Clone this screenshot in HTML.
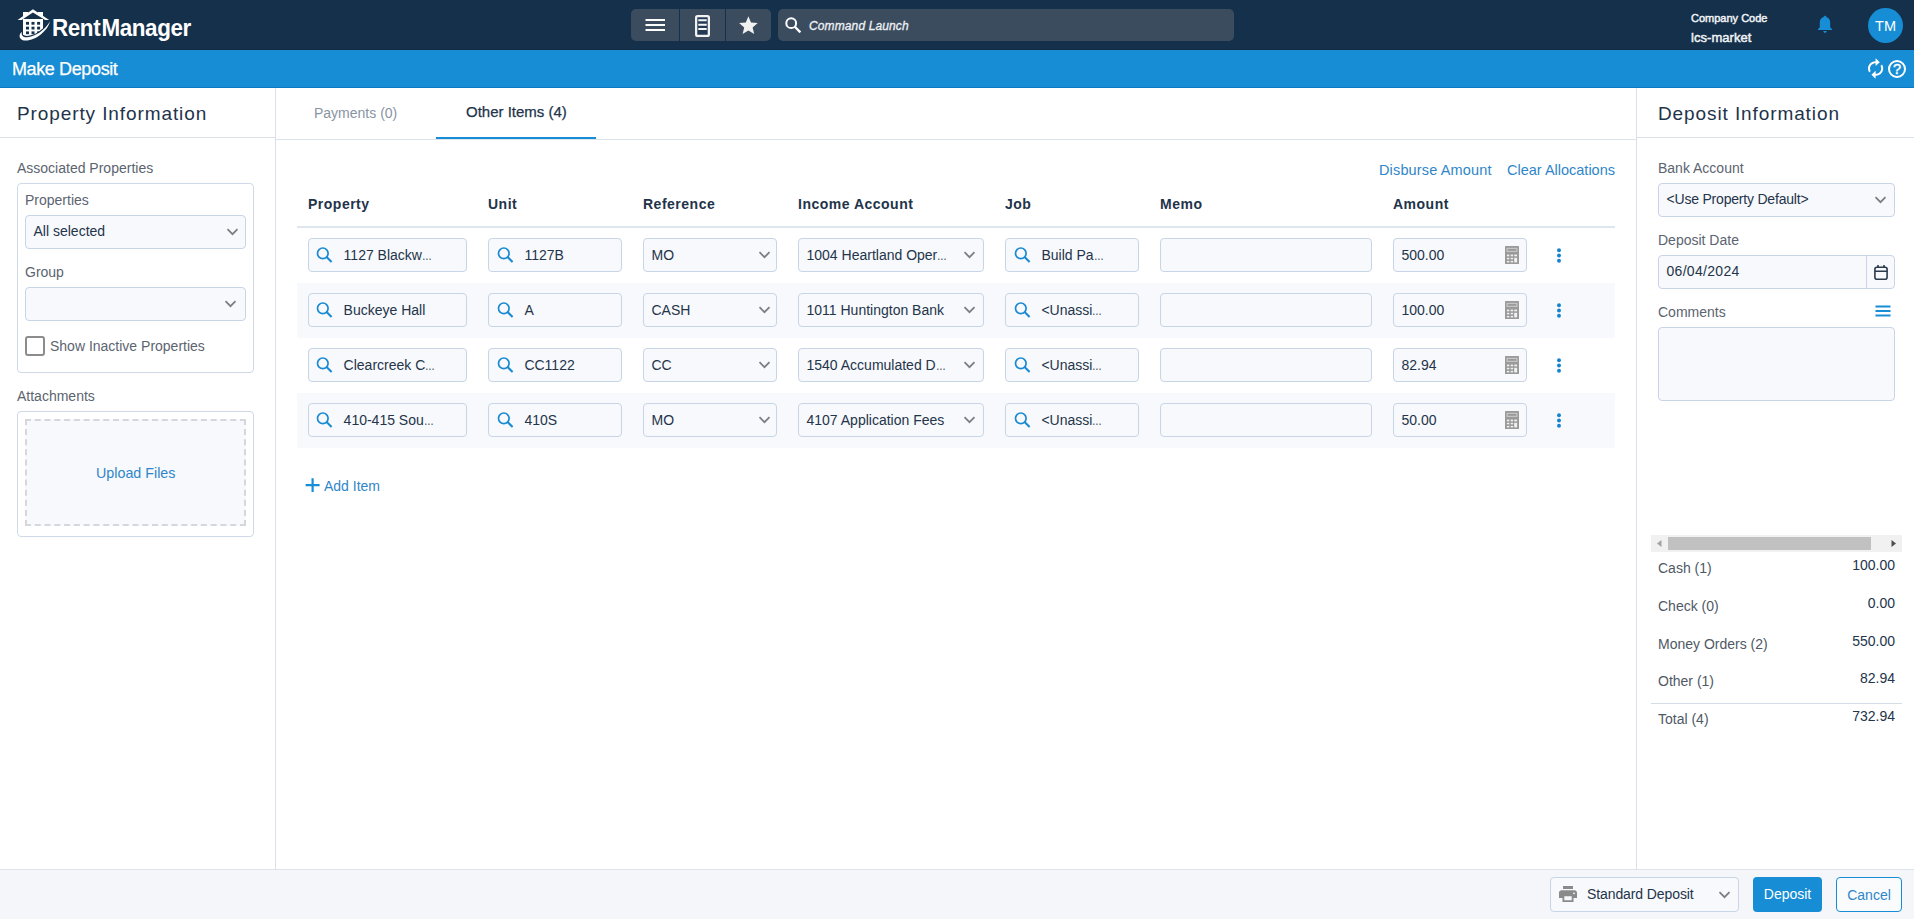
<!DOCTYPE html>
<html lang="en">
<head>
<meta charset="utf-8">
<title>Make Deposit - Rent Manager</title>
<style>
*{box-sizing:border-box;margin:0;padding:0}
html,body{width:1914px;height:919px;overflow:hidden;background:#fff}
body{font-family:"Liberation Sans",sans-serif;font-size:14px;color:#1f2d3d;position:relative}
.abs{position:absolute}
/* top bar */
#top{position:absolute;left:0;top:0;width:1914px;height:50px;background:#15304b;border-bottom:1px solid #122a42}
#sub{position:absolute;left:0;top:50px;width:1914px;height:38px;background:#168dd4;border-bottom:1px solid #0b7ac6}
#sub .ttl{position:absolute;left:12px;top:8px;font-size:18px;color:#fff;line-height:22px;letter-spacing:-.38px;-webkit-text-stroke:.25px #fff;white-space:nowrap}
.tb{position:absolute;top:9px;height:32px;background:#3b4c5f}
#cmd{position:absolute;left:778px;top:9px;width:456px;height:32px;border-radius:5px;background:#3b4c5f}
#cmd span{position:absolute;left:31px;top:9px;font-style:italic;font-size:12px;color:#eef1f4;line-height:16px;letter-spacing:.12px;-webkit-text-stroke:.3px #eef1f4;white-space:nowrap}
#cc1{position:absolute;left:1691px;top:11px;font-size:11px;color:#f2f4f6;line-height:14px;letter-spacing:0;white-space:nowrap;-webkit-text-stroke:.45px #f2f4f6}
#cc2{position:absolute;left:1691px;top:30px;font-size:13px;color:#f2f4f6;line-height:15px;letter-spacing:.05px;white-space:nowrap;-webkit-text-stroke:.45px #f2f4f6}
#av{position:absolute;left:1868px;top:8px;width:35px;height:35px;border-radius:50%;background:#168dd4;color:#fff;font-size:14.5px;text-align:center;line-height:37px}
/* panels */
#left{position:absolute;left:0;top:88px;width:276px;height:781px;border-right:1px solid #d9e0ea;background:#fff}
#right{position:absolute;left:1636px;top:88px;width:278px;height:781px;border-left:1px solid #d9e0ea;background:#fff}
.ph{position:absolute;left:0;top:0;width:100%;height:50px;border-bottom:1px solid #d9e0ea}
.ph span{position:absolute;top:14px;font-size:19px;color:#22334a;line-height:24px;letter-spacing:.9px;white-space:nowrap}
.lbl{position:absolute;font-size:14px;color:#5b6470;line-height:17px;white-space:nowrap}
.box{position:absolute;border:1px solid #cfd9e8;border-radius:4px;background:#fff}
.inp{position:absolute;height:34px;border:1px solid #c8d5e6;border-radius:4px;background:#f7f9fc;font-size:14px;color:#24344a;line-height:32px;white-space:nowrap;overflow:hidden}
.inp .t{position:absolute;top:0;left:7.5px}
.inp svg{position:absolute}
.el{display:inline-block;font-style:normal;width:9.6px;transform:scaleX(.7);transform-origin:0 50%}
.lnk{position:absolute;font-size:14.5px;color:#2f86c9;line-height:18px;white-space:nowrap}
/* center */
#center{position:absolute;left:276px;top:88px;width:1360px;height:781px;background:#fff}
#tabs{position:absolute;left:0;top:0;width:1360px;height:52px;border-bottom:1px solid #dde3ec}
.th{position:absolute;top:108px;font-size:14px;font-weight:bold;letter-spacing:.5px;color:#22334a;line-height:17px;white-space:nowrap}
.row{position:absolute;left:21px;width:1318px;height:55px}
.row.alt{background:#f7f9fc}
/* footer */
#foot{position:absolute;left:0;top:869px;width:1914px;height:50px;background:#f4f6fa;border-top:1px solid #dde3ec}
.sumr{position:absolute;left:21px;width:237px;height:20px}
.sumr .a{position:absolute;left:0;top:3px;font-size:14px;color:#4f5965;line-height:17px}
.sumr .b{position:absolute;right:0;top:0;font-size:14px;color:#24344a;line-height:17px}
</style>
</head>
<body>
<div id="top">
  <svg class="abs" style="left:0;top:0" width="60" height="50" viewBox="0 0 60 50">
    <path d="M23 19.1 H43 V29.8 C40 32.8 33 36.5 27 36.4 C25.2 36.4 23.8 36.1 23 35.7 Z" fill="#fff"/>
    <g fill="#15304b">
      <rect x="26" y="21.9" width="3" height="2.8"/><rect x="31.5" y="21.9" width="3" height="2.8"/><rect x="37.1" y="21.9" width="3" height="2.8"/>
      <rect x="26" y="26.7" width="3" height="2.8"/><rect x="31.5" y="26.7" width="3" height="2.8"/><rect x="37.1" y="26.7" width="3" height="2.8"/>
      <rect x="26" y="31.4" width="3" height="2.8"/><rect x="31.5" y="31.4" width="3" height="2.8"/><rect x="37.1" y="31.4" width="3" height="2.8"/>
    </g>
    <path d="M21.8 32.2 C20.8 35 22.5 37 27 37 C35 37 45 30 49.8 22" fill="none" stroke="#15304b" stroke-width="2.2"/>
    <path d="M50 21.6 C47.4 31 36 40.8 25.5 40.6 C20.6 40.5 18.2 37 20.4 33.2 L22 32 C21 35.2 22.8 37.4 27.2 37.3 C35 37.1 45 30 50 21.6 Z" fill="#fff"/>
    <polygon points="23,12.1 28.3,12.1 28.3,14.2 23,17.6" fill="#fff"/>
    <polygon points="43,12.1 37.7,12.1 37.7,14.2 43,17.6" fill="#fff"/>
    <polygon points="17.6,19.9 32.9,9.2 49.2,19.9 45.2,19.9 32.9,12.4 21.6,19.9" fill="#fff"/>
  </svg>
  <div class="abs" style="left:52px;top:14.5px;font-size:23px;font-weight:bold;color:#fff;line-height:26px;letter-spacing:-.45px;word-spacing:-4.6px;white-space:nowrap;transform:scaleX(.977);transform-origin:0 0">Rent Manager</div>
  <div class="abs" style="left:631px;top:9px;width:140px;height:32px;border-radius:5px;background:#3b4c5f"></div>
  <div class="abs" style="left:679px;top:9px;width:1px;height:32px;background:#15304b"></div>
  <div class="abs" style="left:725px;top:9px;width:1px;height:32px;background:#15304b"></div>
  <svg class="abs" style="left:631px;top:9px" width="140" height="32" viewBox="0 0 140 32">
    <path d="M14.5 11 H34 M14.5 16 H34 M14.5 21 H34" stroke="#fff" stroke-width="2" fill="none"/>
    <rect x="65.15" y="7.05" width="12.7" height="19.8" rx="1.4" fill="#223a54" stroke="#f2f2f2" stroke-width="2.3"/>
    <path d="M67.3 11.3 H75.7 M67.3 15.75 H75.7 M67.3 20 H75.7" stroke="#f6f6f6" stroke-width="2" fill="none"/>
    <path d="M117.5 7.6 L120.1 13.8 L126.8 14.4 L121.7 18.8 L123.3 25.4 L117.5 21.9 L111.7 25.4 L113.3 18.8 L108.2 14.4 L114.9 13.8 Z" fill="#f1f1f1" transform="translate(-0.1,-0.4)"/>
  </svg>
  <div id="cmd"><svg class="abs" style="left:7px;top:8px" width="17" height="16" viewBox="0 0 17 16"><circle cx="6.2" cy="6.2" r="4.9" fill="none" stroke="#fff" stroke-width="2"/><path d="M9.8 9.8 L15.4 15.4" stroke="#fff" stroke-width="2.3" fill="none"/></svg><span>Command Launch</span></div>
  <div id="cc1">Company Code</div>
  <div id="cc2">lcs-market</div>
  <svg class="abs" style="left:1817px;top:15px" width="16" height="19" viewBox="0 0 16 19"><path d="M8 0.8 C8.8 0.8 9.3 1.4 9.3 2.1 C11.8 2.8 13.2 4.9 13.2 7.6 V12.2 L15 14.2 V15 H1 V14.2 L2.8 12.2 V7.6 C2.8 4.9 4.2 2.8 6.7 2.1 C6.7 1.4 7.2 0.8 8 0.8 Z" fill="#168dd4"/><path d="M6.3 16 H9.7 C9.7 17 9 17.8 8 17.8 C7 17.8 6.3 17 6.3 16 Z" fill="#168dd4"/></svg>
  <div id="av">TM</div>
</div>
<div id="sub"><div class="ttl">Make Deposit</div>
  <svg class="abs" style="left:1866px;top:8px" width="20" height="22" viewBox="0 0 20 22"><path d="M10 4.2 V1.2 L5.8 5.2 L10 9.2 V6.2 C13.1 6.2 15.6 8.6 15.6 11.6 C15.6 12.5 15.4 13.4 14.9 14.2 L16.4 15.6 C17.2 14.5 17.6 13.1 17.6 11.6 C17.6 7.5 14.2 4.2 10 4.2 Z M10 17 C6.9 17 4.4 14.6 4.4 11.6 C4.4 10.7 4.6 9.8 5.1 9 L3.6 7.6 C2.8 8.7 2.4 10.1 2.4 11.6 C2.4 15.7 5.8 19 10 19 V22 L14.2 18 L10 14 Z" fill="#fff" transform="translate(19.6,-0.9) scale(-1,0.98)"/></svg>
  <div class="abs" style="left:1888px;top:9.5px;width:18px;height:18px;border:2px solid #fff;border-radius:50%;color:#fff;font-size:14.5px;-webkit-text-stroke:.4px #fff;text-align:center;line-height:14.5px">?</div>
</div>

<div id="left">
  <div class="ph"><span style="left:17px">Property Information</span></div>
  <div class="lbl" style="left:17px;top:72px">Associated Properties</div>
  <div class="box" style="left:17px;top:95px;width:237px;height:190px"></div>
  <div class="lbl" style="left:25px;top:104px">Properties</div>
  <div class="inp" style="left:25px;top:127px;width:221px"><span class="t" style="top:-1px">All selected</span><svg style="left:200px;top:12px" width="13" height="8" viewBox="0 0 13 8"><path d="M1.5 1.2 L6.5 6.2 L11.5 1.2" fill="none" stroke="#7b7f85" stroke-width="1.8"/></svg></div>
  <div class="lbl" style="left:25px;top:176px">Group</div>
  <div class="inp" style="left:25px;top:199px;width:221px"><svg style="left:198px;top:12px" width="13" height="8" viewBox="0 0 13 8"><path d="M1.5 1.2 L6.5 6.2 L11.5 1.2" fill="none" stroke="#7b7f85" stroke-width="1.8"/></svg></div>
  <div class="abs" style="left:25px;top:248px;width:20px;height:20px;border:2px solid #8c8c8c;border-radius:3px;background:#fff"></div>
  <div class="lbl" style="left:50px;top:250px">Show Inactive Properties</div>
  <div class="lbl" style="left:17px;top:300px">Attachments</div>
  <div class="box" style="left:17px;top:323px;width:237px;height:126px"></div>
  <div class="abs" style="left:25px;top:331px;width:221px;height:107px;background:#f7f9fc;border:2px dashed #d4d7db"></div>
  <div class="lnk" style="left:96px;top:376px;font-size:14.3px">Upload Files</div>
</div>

<div id="center">
  <div id="tabs"><div class="abs" style="left:38px;top:17px;font-size:14px;color:#8894a3;line-height:17px;white-space:nowrap">Payments (0)</div><div class="abs" style="left:190px;top:15px;font-size:15px;color:#22334a;line-height:18px;white-space:nowrap;-webkit-text-stroke:.25px #22334a">Other Items (4)</div><div class="abs" style="left:160px;top:49px;width:160px;height:2px;background:#168dd4"></div></div>
  <div class="lnk" style="left:1103px;top:73px;letter-spacing:.15px">Disburse Amount</div>
  <div class="lnk" style="left:1231px;top:73px">Clear Allocations</div>
  <div class="th" style="left:32px">Property</div>
  <div class="th" style="left:212px">Unit</div>
  <div class="th" style="left:367px">Reference</div>
  <div class="th" style="left:522px">Income Account</div>
  <div class="th" style="left:729px">Job</div>
  <div class="th" style="left:884px">Memo</div>
  <div class="th" style="left:1117px">Amount</div>
  <div class="abs" style="left:21px;top:138px;width:1318px;height:2px;background:#dfe6ee"></div>
  <div class="row" style="top:140px">
    <div class="inp" style="left:11px;top:10px;width:159px"><svg style="left:7px;top:8px" width="17" height="17" viewBox="0 0 17 17"><circle cx="6.8" cy="6.3" r="5.3" fill="none" stroke="#1a8ad2" stroke-width="1.7"/><path d="M10.6 10.1 L15.6 15.1" stroke="#1a8ad2" stroke-width="2.1" fill="none"/></svg><span class="t" style="left:34.6px">1127 Blackw<i class="el">…</i></span></div>
    <div class="inp" style="left:191px;top:10px;width:134px"><svg style="left:8px;top:8px" width="17" height="17" viewBox="0 0 17 17"><circle cx="6.8" cy="6.3" r="5.3" fill="none" stroke="#1a8ad2" stroke-width="1.7"/><path d="M10.6 10.1 L15.6 15.1" stroke="#1a8ad2" stroke-width="2.1" fill="none"/></svg><span class="t" style="left:35.4px">1127B</span></div>
    <div class="inp" style="left:346px;top:10px;width:134px"><span class="t">MO</span><svg style="left:114px;top:12px" width="13" height="8" viewBox="0 0 13 8"><path d="M1.5 1.2 L6.5 6.2 L11.5 1.2" fill="none" stroke="#7b7f85" stroke-width="1.8"/></svg></div>
    <div class="inp" style="left:501px;top:10px;width:186px"><span class="t">1004 Heartland Oper<i class="el">…</i></span><svg style="left:164px;top:12px" width="13" height="8" viewBox="0 0 13 8"><path d="M1.5 1.2 L6.5 6.2 L11.5 1.2" fill="none" stroke="#7b7f85" stroke-width="1.8"/></svg></div>
    <div class="inp" style="left:708px;top:10px;width:134px"><svg style="left:8px;top:8px" width="17" height="17" viewBox="0 0 17 17"><circle cx="6.8" cy="6.3" r="5.3" fill="none" stroke="#1a8ad2" stroke-width="1.7"/><path d="M10.6 10.1 L15.6 15.1" stroke="#1a8ad2" stroke-width="2.1" fill="none"/></svg><span class="t" style="left:35.4px">Build Pa<i class="el">…</i></span></div>
    <div class="inp" style="left:863px;top:10px;width:212px"></div>
    <div class="inp" style="left:1096px;top:10px;width:134px"><span class="t">500.00</span><svg style="left:111px;top:7px" width="14" height="18" viewBox="0 0 14 18"><rect x="0" y="0" width="14" height="18" rx=".6" fill="#9a9a9a"/><rect x="1.5" y="1.8" width="11" height="4.2" fill="#c4c4c4"/><rect x="2.8" y="3" width="8.4" height="1.8" fill="#9a9a9a"/><g fill="#f1f1f1"><rect x="1.9" y="8.6" width="2.4" height="1.7"/><rect x="5.7" y="8.6" width="2.4" height="1.7"/><rect x="9.2" y="8.6" width="2.9" height="1.7"/><rect x="1.9" y="11.8" width="2.4" height="1.5"/><rect x="5.7" y="11.8" width="2.4" height="1.5"/><rect x="1.9" y="14.9" width="2.4" height="1.5"/><rect x="5.7" y="14.9" width="2.4" height="1.5"/><rect x="9.2" y="11.8" width="2.9" height="4.6"/></g></svg></div>
    <svg class="abs" style="left:1258.7px;top:20px" width="6" height="16" viewBox="0 0 6 16"><circle cx="3" cy="2.3" r="1.95" fill="#1583d3"/><circle cx="3" cy="7.55" r="1.95" fill="#1583d3"/><circle cx="3" cy="12.8" r="1.95" fill="#1583d3"/></svg>
  </div>
  <div class="row alt" style="top:195px">
    <div class="inp" style="left:11px;top:10px;width:159px"><svg style="left:7px;top:8px" width="17" height="17" viewBox="0 0 17 17"><circle cx="6.8" cy="6.3" r="5.3" fill="none" stroke="#1a8ad2" stroke-width="1.7"/><path d="M10.6 10.1 L15.6 15.1" stroke="#1a8ad2" stroke-width="2.1" fill="none"/></svg><span class="t" style="left:34.6px">Buckeye Hall</span></div>
    <div class="inp" style="left:191px;top:10px;width:134px"><svg style="left:8px;top:8px" width="17" height="17" viewBox="0 0 17 17"><circle cx="6.8" cy="6.3" r="5.3" fill="none" stroke="#1a8ad2" stroke-width="1.7"/><path d="M10.6 10.1 L15.6 15.1" stroke="#1a8ad2" stroke-width="2.1" fill="none"/></svg><span class="t" style="left:35.4px">A</span></div>
    <div class="inp" style="left:346px;top:10px;width:134px"><span class="t">CASH</span><svg style="left:114px;top:12px" width="13" height="8" viewBox="0 0 13 8"><path d="M1.5 1.2 L6.5 6.2 L11.5 1.2" fill="none" stroke="#7b7f85" stroke-width="1.8"/></svg></div>
    <div class="inp" style="left:501px;top:10px;width:186px"><span class="t">1011 Huntington Bank</span><svg style="left:164px;top:12px" width="13" height="8" viewBox="0 0 13 8"><path d="M1.5 1.2 L6.5 6.2 L11.5 1.2" fill="none" stroke="#7b7f85" stroke-width="1.8"/></svg></div>
    <div class="inp" style="left:708px;top:10px;width:134px"><svg style="left:8px;top:8px" width="17" height="17" viewBox="0 0 17 17"><circle cx="6.8" cy="6.3" r="5.3" fill="none" stroke="#1a8ad2" stroke-width="1.7"/><path d="M10.6 10.1 L15.6 15.1" stroke="#1a8ad2" stroke-width="2.1" fill="none"/></svg><span class="t" style="left:35.4px">&lt;Unassi<i class="el">…</i></span></div>
    <div class="inp" style="left:863px;top:10px;width:212px"></div>
    <div class="inp" style="left:1096px;top:10px;width:134px"><span class="t">100.00</span><svg style="left:111px;top:7px" width="14" height="18" viewBox="0 0 14 18"><rect x="0" y="0" width="14" height="18" rx=".6" fill="#9a9a9a"/><rect x="1.5" y="1.8" width="11" height="4.2" fill="#c4c4c4"/><rect x="2.8" y="3" width="8.4" height="1.8" fill="#9a9a9a"/><g fill="#f1f1f1"><rect x="1.9" y="8.6" width="2.4" height="1.7"/><rect x="5.7" y="8.6" width="2.4" height="1.7"/><rect x="9.2" y="8.6" width="2.9" height="1.7"/><rect x="1.9" y="11.8" width="2.4" height="1.5"/><rect x="5.7" y="11.8" width="2.4" height="1.5"/><rect x="1.9" y="14.9" width="2.4" height="1.5"/><rect x="5.7" y="14.9" width="2.4" height="1.5"/><rect x="9.2" y="11.8" width="2.9" height="4.6"/></g></svg></div>
    <svg class="abs" style="left:1258.7px;top:20px" width="6" height="16" viewBox="0 0 6 16"><circle cx="3" cy="2.3" r="1.95" fill="#1583d3"/><circle cx="3" cy="7.55" r="1.95" fill="#1583d3"/><circle cx="3" cy="12.8" r="1.95" fill="#1583d3"/></svg>
  </div>
  <div class="row" style="top:250px">
    <div class="inp" style="left:11px;top:10px;width:159px"><svg style="left:7px;top:8px" width="17" height="17" viewBox="0 0 17 17"><circle cx="6.8" cy="6.3" r="5.3" fill="none" stroke="#1a8ad2" stroke-width="1.7"/><path d="M10.6 10.1 L15.6 15.1" stroke="#1a8ad2" stroke-width="2.1" fill="none"/></svg><span class="t" style="left:34.6px">Clearcreek C<i class="el">…</i></span></div>
    <div class="inp" style="left:191px;top:10px;width:134px"><svg style="left:8px;top:8px" width="17" height="17" viewBox="0 0 17 17"><circle cx="6.8" cy="6.3" r="5.3" fill="none" stroke="#1a8ad2" stroke-width="1.7"/><path d="M10.6 10.1 L15.6 15.1" stroke="#1a8ad2" stroke-width="2.1" fill="none"/></svg><span class="t" style="left:35.4px">CC1122</span></div>
    <div class="inp" style="left:346px;top:10px;width:134px"><span class="t">CC</span><svg style="left:114px;top:12px" width="13" height="8" viewBox="0 0 13 8"><path d="M1.5 1.2 L6.5 6.2 L11.5 1.2" fill="none" stroke="#7b7f85" stroke-width="1.8"/></svg></div>
    <div class="inp" style="left:501px;top:10px;width:186px"><span class="t">1540 Accumulated D<i class="el">…</i></span><svg style="left:164px;top:12px" width="13" height="8" viewBox="0 0 13 8"><path d="M1.5 1.2 L6.5 6.2 L11.5 1.2" fill="none" stroke="#7b7f85" stroke-width="1.8"/></svg></div>
    <div class="inp" style="left:708px;top:10px;width:134px"><svg style="left:8px;top:8px" width="17" height="17" viewBox="0 0 17 17"><circle cx="6.8" cy="6.3" r="5.3" fill="none" stroke="#1a8ad2" stroke-width="1.7"/><path d="M10.6 10.1 L15.6 15.1" stroke="#1a8ad2" stroke-width="2.1" fill="none"/></svg><span class="t" style="left:35.4px">&lt;Unassi<i class="el">…</i></span></div>
    <div class="inp" style="left:863px;top:10px;width:212px"></div>
    <div class="inp" style="left:1096px;top:10px;width:134px"><span class="t">82.94</span><svg style="left:111px;top:7px" width="14" height="18" viewBox="0 0 14 18"><rect x="0" y="0" width="14" height="18" rx=".6" fill="#9a9a9a"/><rect x="1.5" y="1.8" width="11" height="4.2" fill="#c4c4c4"/><rect x="2.8" y="3" width="8.4" height="1.8" fill="#9a9a9a"/><g fill="#f1f1f1"><rect x="1.9" y="8.6" width="2.4" height="1.7"/><rect x="5.7" y="8.6" width="2.4" height="1.7"/><rect x="9.2" y="8.6" width="2.9" height="1.7"/><rect x="1.9" y="11.8" width="2.4" height="1.5"/><rect x="5.7" y="11.8" width="2.4" height="1.5"/><rect x="1.9" y="14.9" width="2.4" height="1.5"/><rect x="5.7" y="14.9" width="2.4" height="1.5"/><rect x="9.2" y="11.8" width="2.9" height="4.6"/></g></svg></div>
    <svg class="abs" style="left:1258.7px;top:20px" width="6" height="16" viewBox="0 0 6 16"><circle cx="3" cy="2.3" r="1.95" fill="#1583d3"/><circle cx="3" cy="7.55" r="1.95" fill="#1583d3"/><circle cx="3" cy="12.8" r="1.95" fill="#1583d3"/></svg>
  </div>
  <div class="row alt" style="top:305px">
    <div class="inp" style="left:11px;top:10px;width:159px"><svg style="left:7px;top:8px" width="17" height="17" viewBox="0 0 17 17"><circle cx="6.8" cy="6.3" r="5.3" fill="none" stroke="#1a8ad2" stroke-width="1.7"/><path d="M10.6 10.1 L15.6 15.1" stroke="#1a8ad2" stroke-width="2.1" fill="none"/></svg><span class="t" style="left:34.6px">410-415 Sou<i class="el">…</i></span></div>
    <div class="inp" style="left:191px;top:10px;width:134px"><svg style="left:8px;top:8px" width="17" height="17" viewBox="0 0 17 17"><circle cx="6.8" cy="6.3" r="5.3" fill="none" stroke="#1a8ad2" stroke-width="1.7"/><path d="M10.6 10.1 L15.6 15.1" stroke="#1a8ad2" stroke-width="2.1" fill="none"/></svg><span class="t" style="left:35.4px">410S</span></div>
    <div class="inp" style="left:346px;top:10px;width:134px"><span class="t">MO</span><svg style="left:114px;top:12px" width="13" height="8" viewBox="0 0 13 8"><path d="M1.5 1.2 L6.5 6.2 L11.5 1.2" fill="none" stroke="#7b7f85" stroke-width="1.8"/></svg></div>
    <div class="inp" style="left:501px;top:10px;width:186px"><span class="t">4107 Application Fees</span><svg style="left:164px;top:12px" width="13" height="8" viewBox="0 0 13 8"><path d="M1.5 1.2 L6.5 6.2 L11.5 1.2" fill="none" stroke="#7b7f85" stroke-width="1.8"/></svg></div>
    <div class="inp" style="left:708px;top:10px;width:134px"><svg style="left:8px;top:8px" width="17" height="17" viewBox="0 0 17 17"><circle cx="6.8" cy="6.3" r="5.3" fill="none" stroke="#1a8ad2" stroke-width="1.7"/><path d="M10.6 10.1 L15.6 15.1" stroke="#1a8ad2" stroke-width="2.1" fill="none"/></svg><span class="t" style="left:35.4px">&lt;Unassi<i class="el">…</i></span></div>
    <div class="inp" style="left:863px;top:10px;width:212px"></div>
    <div class="inp" style="left:1096px;top:10px;width:134px"><span class="t">50.00</span><svg style="left:111px;top:7px" width="14" height="18" viewBox="0 0 14 18"><rect x="0" y="0" width="14" height="18" rx=".6" fill="#9a9a9a"/><rect x="1.5" y="1.8" width="11" height="4.2" fill="#c4c4c4"/><rect x="2.8" y="3" width="8.4" height="1.8" fill="#9a9a9a"/><g fill="#f1f1f1"><rect x="1.9" y="8.6" width="2.4" height="1.7"/><rect x="5.7" y="8.6" width="2.4" height="1.7"/><rect x="9.2" y="8.6" width="2.9" height="1.7"/><rect x="1.9" y="11.8" width="2.4" height="1.5"/><rect x="5.7" y="11.8" width="2.4" height="1.5"/><rect x="1.9" y="14.9" width="2.4" height="1.5"/><rect x="5.7" y="14.9" width="2.4" height="1.5"/><rect x="9.2" y="11.8" width="2.9" height="4.6"/></g></svg></div>
    <svg class="abs" style="left:1258.7px;top:20px" width="6" height="16" viewBox="0 0 6 16"><circle cx="3" cy="2.3" r="1.95" fill="#1583d3"/><circle cx="3" cy="7.55" r="1.95" fill="#1583d3"/><circle cx="3" cy="12.8" r="1.95" fill="#1583d3"/></svg>
  </div>
  <svg class="abs" style="left:29px;top:390px" width="15" height="15" viewBox="0 0 15 15"><path d="M7.6 0.2 V14 M0.6 7.1 H14.6" stroke="#168dd4" stroke-width="2.2" fill="none"/></svg>
  <div class="lnk" style="left:48px;top:389px;font-size:14px">Add Item</div>
</div>

<div id="right">
  <div class="ph"><span style="left:21px">Deposit Information</span></div>
  <div class="lbl" style="left:21px;top:72px">Bank Account</div>
  <div class="inp" style="left:21px;top:95px;width:237px"><span class="t" style="top:-1px;letter-spacing:-.2px">&lt;Use Property Default&gt;</span><svg style="left:215px;top:12px" width="13" height="8" viewBox="0 0 13 8"><path d="M1.5 1.2 L6.5 6.2 L11.5 1.2" fill="none" stroke="#7b7f85" stroke-width="1.8"/></svg></div>
  <div class="lbl" style="left:21px;top:144px">Deposit Date</div>
  <div class="inp" style="left:21px;top:167px;width:237px"><span class="t" style="top:-1px;letter-spacing:.3px">06/04/2024</span><div class="abs" style="left:207px;top:0;width:1px;height:32px;background:#c8d5e6"></div><svg style="left:214px;top:8px" width="16" height="17" viewBox="0 0 16 17"><rect x="1.9" y="3.2" width="12.2" height="12" rx="2" fill="none" stroke="#2b3a4d" stroke-width="1.6"/><path d="M1.9 7.3 H14.1 M5 1 V4 M11 1 V4" stroke="#2b3a4d" stroke-width="1.6" fill="none"/></svg></div>
  <div class="lbl" style="left:21px;top:216px">Comments</div>
  <svg class="abs" style="left:238px;top:217px" width="16" height="12" viewBox="0 0 16 12"><path d="M0.5 1.5 H15.5 M0.5 6 H15.5 M0.5 10.5 H15.5" stroke="#168dd4" stroke-width="1.8" fill="none"/></svg>
  <div class="inp" style="left:21px;top:239px;width:237px;height:74px"></div>
  <div class="abs" style="left:14px;top:447px;width:251px;height:17px;background:#f1f1f1"></div>
  <div class="abs" style="left:31px;top:449px;width:203px;height:13px;background:#c1c1c1"></div>
  <svg class="abs" style="left:14px;top:447px" width="251" height="17" viewBox="0 0 251 17"><path d="M10.5 5 V12 L6 8.5 Z" fill="#a3a3a3"/><path d="M240.5 5 V12 L245 8.5 Z" fill="#505050"/></svg>
  <div class="sumr" style="left:21px;top:469px"><span class="a">Cash (1)</span><span class="b">100.00</span></div>
  <div class="sumr" style="left:21px;top:507px"><span class="a">Check (0)</span><span class="b">0.00</span></div>
  <div class="sumr" style="left:21px;top:545px"><span class="a">Money Orders (2)</span><span class="b">550.00</span></div>
  <div class="sumr" style="left:21px;top:582px"><span class="a">Other (1)</span><span class="b">82.94</span></div>
  <div class="sumr" style="left:21px;top:620px"><span class="a">Total (4)</span><span class="b">732.94</span></div>
  <div class="abs" style="left:14px;top:615px;width:251px;height:1px;background:#d5dce6"></div>
</div>

<div id="foot">
  <div class="inp" style="left:1550px;top:7px;width:189px;height:35px;line-height:33px;background:#f7f9fc"><svg style="left:8px;top:8px" width="18" height="16" viewBox="0 0 18 16"><rect x="4" y="0" width="10" height="3" fill="#8a8a8a"/><path d="M2.5 4.3 H15.5 C16.9 4.3 18 5.4 18 6.8 V12 H14.5 V16 H3.5 V12 H0 V6.8 C0 5.4 1.1 4.3 2.5 4.3 Z M5.3 10.3 V14.3 H12.7 V10.3 Z" fill="#8a8a8a" fill-rule="evenodd"/><circle cx="15" cy="7.3" r="0.9" fill="#f7f9fc"/></svg><span class="t" style="left:36px;letter-spacing:-.1px">Standard Deposit</span><svg style="left:167px;top:13px" width="13" height="8" viewBox="0 0 13 8"><path d="M1.5 1.2 L6.5 6.2 L11.5 1.2" fill="none" stroke="#7b7f85" stroke-width="1.8"/></svg></div>
  <div class="abs" style="left:1753px;top:7px;width:69px;height:35px;border-radius:4px;background:#168dd4;color:#fff;font-size:14px;text-align:center;line-height:35px">Deposit</div>
  <div class="abs" style="left:1836px;top:7px;width:66px;height:35px;border-radius:4px;border:1px solid #168dd4;background:#f9fbfd;color:#2f86c9;font-size:14px;text-align:center;line-height:34px">Cancel</div>
</div>
</body>
</html>
